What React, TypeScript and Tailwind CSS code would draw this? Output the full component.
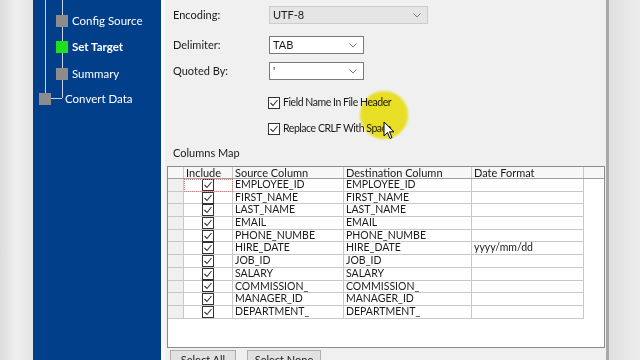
import React from "react"

const rows: { name: string; fmt?: string }[] = [
  { name: "EMPLOYEE_ID" },
  { name: "FIRST_NAME" },
  { name: "LAST_NAME" },
  { name: "EMAIL" },
  { name: "PHONE_NUMBE" },
  { name: "HIRE_DATE", fmt: "yyyy/mm/dd" },
  { name: "JOB_ID" },
  { name: "SALARY" },
  { name: "COMMISSION_" },
  { name: "MANAGER_ID" },
  { name: "DEPARTMENT_" },
]

function Chevron() {
  return (
    <svg width="8" height="5" viewBox="0 0 8 5" className="shrink-0">
      <path d="M0.5 0.5 L4 4 L7.5 0.5" fill="none" stroke="#7a7a7a" strokeWidth="1" />
    </svg>
  )
}

function CheckBox() {
  return (
    <svg width="12" height="12" viewBox="0 0 12 12" className="shrink-0">
      <rect x="0.5" y="0.5" width="11" height="11" fill="#fff" stroke="#333" />
      <path d="M2.5 6 L5 8.5 L9.5 3" fill="none" stroke="#333" strokeWidth="1.1" />
    </svg>
  )
}

function Combo({ value, width, disabled }: { value: string; width: string; disabled?: boolean }) {
  return (
    <div
      className={`flex h-[18px] items-center justify-between border pl-[3px] pr-[6px] ${width} ${
        disabled ? "border-[#cccccc] bg-[#e5e5e5]" : "border-[#7a7a7a] bg-white"
      }`}
    >
      <span className="text-[#1a1a1a]">{value}</span>
      <Chevron />
    </div>
  )
}

function TreeNode({ label, color, bold, gap }: { label: string; color: string; bold?: boolean; gap: string }) {
  return (
    <div className={`flex h-[13px] items-center ${gap}`}>
      <div className={`h-[12px] w-[12px] shrink-0 ${color}`} />
      <span className={`text-[11.5px] text-white ${bold ? "font-bold" : ""}`}>{label}</span>
    </div>
  )
}

export default function App() {
  return (
    <div
      className="flex h-[360px] w-[640px] overflow-hidden bg-[#f0f0f0] text-[11px] text-[#1a1a1a]"
      style={{ fontFamily: 'Lato, "Segoe UI", sans-serif' }}
    >
      {/* left desktop strip */}
      <div className="w-[33px] shrink-0 bg-gradient-to-r from-[#dcdcdc] via-[#f0f0f0] to-[#e4e4e4]" />

      {/* wizard steps panel */}
      <div className="relative w-[128px] shrink-0 bg-[#023f8b]">
        <div className="absolute left-[12px] top-0 h-[93px] w-px bg-[#c8d2e6]" />
        <div className="absolute left-[29px] top-0 h-[98px] w-px bg-[#c8d2e6]" />
        <div className="absolute left-[18px] top-[98px] h-px w-[11px] bg-[#c8d2e6]" />
        <div className="absolute left-[23px] top-[14px] flex flex-col gap-[13.5px]">
          <TreeNode label="Config Source" color="bg-[#8c8c8c]" gap="gap-[4px]" />
          <TreeNode label="Set Target" color="bg-[#1ee01e]" bold gap="gap-[4px]" />
          <TreeNode label="Summary" color="bg-[#8c8c8c]" gap="gap-[4px]" />
        </div>
        <div className="absolute left-[6px] top-[92px]">
          <TreeNode label="Convert Data" color="bg-[#8c8c8c]" gap="gap-[14px]" />
        </div>
      </div>

      <div className="w-[4px] shrink-0 bg-[#f8f8f8]" />

      {/* main page */}
      <div className="relative flex w-[441px] shrink-0 flex-col pl-[2px] pt-[6px]">
        <div className="flex shrink-0 flex-col pl-[6px]">
          <div className="flex items-center">
            <span className="w-[96px]">Encoding:</span>
            <Combo value="UTF-8" width="w-[159px]" disabled />
          </div>
          <div className="mt-[12px] flex items-center">
            <span className="w-[96px]">Delimiter:</span>
            <Combo value="TAB" width="w-[95px]" />
          </div>
          <div className="mt-[8px] flex items-center">
            <span className="w-[96px]">Quoted By:</span>
            <Combo value="'" width="w-[95px]" />
          </div>
          <div className="ml-[95px] mt-[16px] flex h-[13px] items-center gap-[3px] text-[10.5px] tracking-[-0.45px]">
            <CheckBox />
            <span>Field Name In File Header</span>
          </div>
          <div className="ml-[95px] mt-[13px] flex h-[13px] items-center gap-[3px] text-[10.5px] tracking-[-0.45px]">
            <CheckBox />
            <span>Replace CRLF With Space</span>
          </div>
          <div className="mt-[12px] flex h-[13px] items-center">Columns Map</div>
        </div>

        {/* columns grid */}
        <div className="mt-[6px] h-[182px] w-[438px] shrink-0 border border-[#8c8c8c] bg-white">
          <div className="flex h-[12px] border-b border-[#a0a0a0] bg-[#f7f7f7] leading-[11px]">
            <div className="w-[16px] border-r border-[#c8c8c8]" />
            <div className="w-[49px] border-r border-[#c8c8c8] pl-[2px]">Include</div>
            <div className="w-[111px] border-r border-[#c8c8c8] pl-[2px]">Source Column</div>
            <div className="w-[128px] border-r border-[#c8c8c8] pl-[2px]">Destination Column</div>
            <div className="w-[112px] border-r border-[#c8c8c8] pl-[2px]">Date Format</div>
          </div>
          {rows.map((r, i) => (
            <div key={r.name} className="flex h-[12.7px] text-[10.5px] leading-[11.7px]">
              <div className="w-[16px] border-b border-r border-[#c8c8c8] bg-[#f0f0f0]" />
              <div
                className={`flex w-[49px] items-center justify-center border-b border-r border-[#c8c8c8] ${
                  i === 0 ? "outline outline-1 -outline-offset-1 outline-dotted outline-[#d08080]" : ""
                }`}
              >
                <CheckBox />
              </div>
              <div className="w-[111px] overflow-hidden border-b border-r border-[#c8c8c8] pl-[2px]">{r.name}</div>
              <div className="w-[128px] overflow-hidden border-b border-r border-[#c8c8c8] pl-[2px]">{r.name}</div>
              <div className="w-[112px] overflow-hidden border-b border-r border-[#c8c8c8] pl-[2px]">{r.fmt ?? ""}</div>
            </div>
          ))}
        </div>

        <div className="mt-[2px] flex shrink-0 gap-[11px] pl-[3px]">
          <button className="h-[20px] w-[66px] border border-[#adadad] bg-[#e1e1e1] text-[11px]">Select All</button>
          <button className="h-[20px] w-[74px] border border-[#adadad] bg-[#e1e1e1] text-[11px]">Select None</button>
        </div>

        {/* cursor highlight */}
        <div className="pointer-events-none absolute left-[195px] top-[91px] h-[48px] w-[48px] rounded-full bg-[#f6ea10] opacity-90 mix-blend-multiply blur-[1px]" />
        <svg className="absolute left-[218px] top-[121px]" width="12" height="19" viewBox="0 0 12 19">
          <path d="M1 1 L1 15 L4.5 11.5 L7 17.5 L9 16.5 L6.5 10.8 L11 10.8 Z" fill="#fff" stroke="#000" strokeWidth="1" />
        </svg>
      </div>

      {/* window edge */}
      <div className="w-[3px] shrink-0 bg-[#a8a8a8]" />
      <div className="flex-1 bg-gradient-to-r from-[#e0e0e0] to-[#ededed]" />
    </div>
  )
}
